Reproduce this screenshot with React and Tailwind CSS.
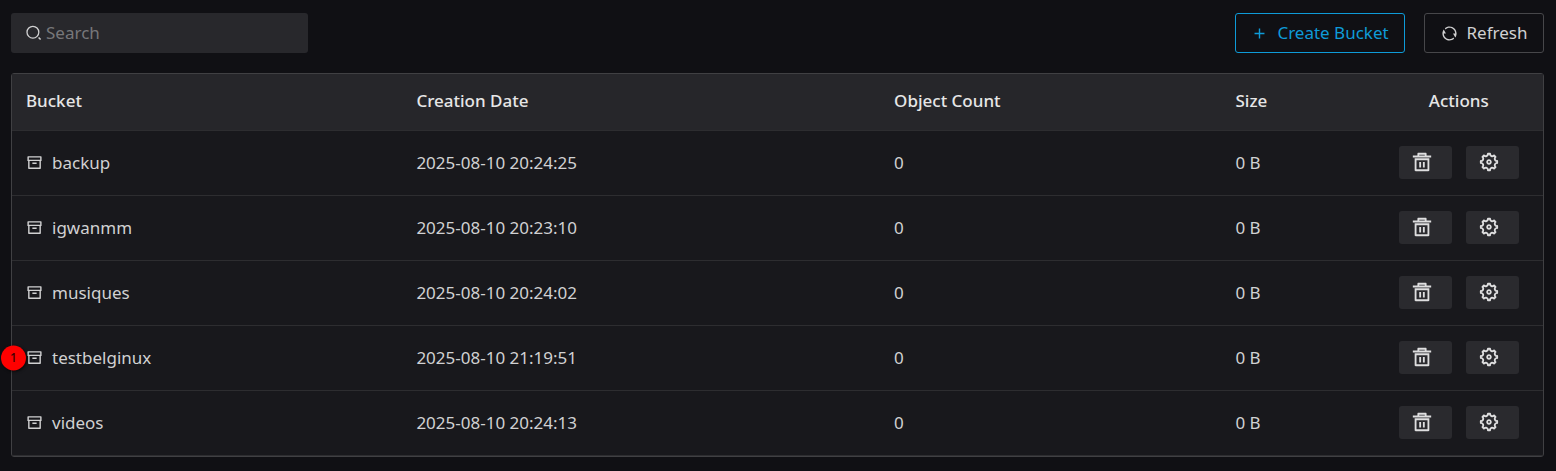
import { RiAddLine, RiArchiveLine, RiDeleteBin5Line, RiRefreshLine, RiSettings5Line } from 'react-icons/ri'

const buckets = [
  { name: 'backup', created: '2025-08-10 20:24:25', objects: 0, size: '0 B' },
  { name: 'igwanmm', created: '2025-08-10 20:23:10', objects: 0, size: '0 B' },
  { name: 'musiques', created: '2025-08-10 20:24:02', objects: 0, size: '0 B' },
  { name: 'testbelginux', created: '2025-08-10 21:19:51', objects: 0, size: '0 B', marker: 1 },
  { name: 'videos', created: '2025-08-10 20:24:13', objects: 0, size: '0 B' },
]

function SearchIcon() {
  return (
    <svg viewBox="0 0 16 16" fill="none" stroke="currentColor" className="size-4 shrink-0" aria-hidden="true">
      <circle cx="6.9" cy="7.2" r="5.9" strokeWidth="1.3" />
      <path d="M12.6 12.5 14.6 14.5" strokeWidth="1.5" />
    </svg>
  )
}

function ActionButton({ icon: Icon, label }) {
  return (
    <button
      type="button"
      aria-label={label}
      className="flex h-[33px] w-[53px] items-start rounded-[3px] bg-[#2a2a2e] pt-[5px] pl-3 text-[#dededf]"
    >
      <Icon className="size-[22px]" />
    </button>
  )
}

function BucketRow({ bucket }) {
  return (
    <tr className="h-[65px] border-b border-[#2d2d30]">
      <td className="relative px-[14px]">
        {bucket.marker ? (
          <span className="absolute top-1/2 -left-[11px] flex size-[25px] -translate-y-1/2 items-center justify-center rounded-full bg-[#ff0000] text-xs font-medium text-[#3a0000] shadow-[1px_1px_3px_rgba(0,0,0,0.7)]">
            {bucket.marker}
          </span>
        ) : null}
        <div className="flex items-center gap-[9px]">
          <RiArchiveLine className="size-[17px]" />
          <span>{bucket.name}</span>
        </div>
      </td>
      <td className="px-[14px]">{bucket.created}</td>
      <td className="px-[14px]">{bucket.objects}</td>
      <td className="px-[14px]">{bucket.size}</td>
      <td>
        <div className="flex justify-center gap-[14px]">
          <ActionButton icon={RiDeleteBin5Line} label={`Delete ${bucket.name}`} />
          <ActionButton icon={RiSettings5Line} label={`Settings for ${bucket.name}`} />
        </div>
      </td>
    </tr>
  )
}

export default function App() {
  return (
    <main className="min-h-screen bg-[#101014] pt-[13px] pr-3 pb-[14px] pl-[11px] font-['Noto_Sans',sans-serif] text-[17px] leading-[26px] text-[#d1d1d2]">
      <div className="flex items-center justify-between">
        <label className="flex h-10 w-[297px] items-center gap-1 rounded-[3px] bg-[#28282c] px-[15px]">
          <SearchIcon />
          <input
            type="text"
            aria-label="Search"
            placeholder="Search"
            className="w-full min-w-0 bg-transparent outline-none placeholder:text-[#77777a]"
          />
        </label>
        <div className="flex gap-[19px]">
          <button
            type="button"
            className="flex h-10 w-[170px] items-center justify-center gap-[9px] rounded-[3px] border border-[#0e9bd8] text-[#0e9bd8]"
          >
            <RiAddLine className="size-[17px]" />
            Create Bucket
          </button>
          <button
            type="button"
            className="flex h-10 w-[120px] items-center justify-center gap-[9px] rounded-[3px] border border-[#47474a]"
          >
            <RiRefreshLine className="size-[17px]" />
            Refresh
          </button>
        </div>
      </div>

      <div className="mt-5 rounded-[3px] border border-[#404043] bg-[#18181c]">
        <table className="w-full table-fixed border-collapse text-left">
          <colgroup>
            <col className="w-[25.5%]" />
            <col className="w-[31.2%]" />
            <col className="w-[22.3%]" />
            <col className="w-[10%]" />
            <col className="w-[11%]" />
          </colgroup>
          <thead>
            <tr className="h-14 border-b border-[#2d2d30] bg-[#26262a] text-[#e6e6e7]">
              <th scope="col" className="px-[14px] pb-0.5 font-medium">Bucket</th>
              <th scope="col" className="px-[14px] pb-0.5 font-medium">Creation Date</th>
              <th scope="col" className="px-[14px] pb-0.5 font-medium">Object Count</th>
              <th scope="col" className="px-[14px] pb-0.5 font-medium">Size</th>
              <th scope="col" className="pb-0.5 text-center font-medium">Actions</th>
            </tr>
          </thead>
          <tbody>
            {buckets.map((bucket) => (
              <BucketRow key={bucket.name} bucket={bucket} />
            ))}
          </tbody>
        </table>
      </div>
    </main>
  )
}
